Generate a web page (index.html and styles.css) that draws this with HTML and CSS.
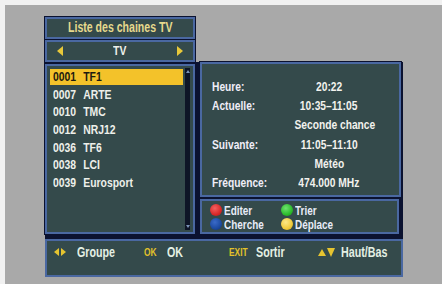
FILE: index.html
```html
<!DOCTYPE html>
<html lang="fr">
<head>
<meta charset="utf-8">
<title>Liste des chaines TV</title>
<link rel="stylesheet" href="styles.css">
</head>
<body>
<div class="screen">
  <div class="top">
    <div class="left">
      <div class="box title"><span class="n nc">Liste des chaines TV</span></div>
      <div class="box tvbar">
        <span class="tri tri-left"></span>
        <span class="n nc">TV</span>
        <span class="tri tri-right"></span>
      </div>
      <div class="box list">
        <ul class="channels">
          <li class="ch selected"><span class="n"><span class="num">0001</span>TF1</span></li>
          <li class="ch"><span class="n"><span class="num">0007</span>ARTE</span></li>
          <li class="ch"><span class="n"><span class="num">0010</span>TMC</span></li>
          <li class="ch"><span class="n"><span class="num">0012</span>NRJ12</span></li>
          <li class="ch"><span class="n"><span class="num">0036</span>TF6</span></li>
          <li class="ch"><span class="n"><span class="num">0038</span>LCI</span></li>
          <li class="ch"><span class="n"><span class="num">0039</span>Eurosport</span></li>
        </ul>
        <div class="scrollbar">
          <span class="sb-up"></span>
          <span class="sb-down"></span>
        </div>
      </div>
    </div>
    <div class="right">
      <div class="box info">
        <span class="lbl"><span class="n">Heure:</span></span><span class="val"><span class="n nc">20:22</span></span>
        <span class="lbl"><span class="n">Actuelle:</span></span><span class="val"><span class="n nc">10:35–11:05</span></span>
        <span class="lbl"></span><span class="val"><span class="n nc">Seconde chance</span></span>
        <span class="lbl"><span class="n">Suivante:</span></span><span class="val"><span class="n nc">11:05–11:10</span></span>
        <span class="lbl"></span><span class="val"><span class="n nc">Météo</span></span>
        <span class="lbl"><span class="n">Fréquence:</span></span><span class="val"><span class="n nc">474.000 MHz</span></span>
      </div>
      <div class="box colors">
        <span class="cbtn"><span class="dot red"></span><span class="n">Editer</span></span>
        <span class="cbtn"><span class="dot green"></span><span class="n">Trier</span></span>
        <span class="cbtn"><span class="dot blue"></span><span class="n">Cherche</span></span>
        <span class="cbtn"><span class="dot yellow"></span><span class="n">Déplace</span></span>
      </div>
    </div>
  </div>
  <div class="footwrap">
    <div class="box footer">
      <span class="key"><span class="tri-s tri-s-left"></span><span class="tri-s tri-s-right"></span></span>
      <span class="klabel"><span class="n">Groupe</span></span>
      <span class="key ktext"><span class="n">OK</span></span>
      <span class="klabel"><span class="n">OK</span></span>
      <span class="key ktext"><span class="n">EXIT</span></span>
      <span class="klabel"><span class="n">Sortir</span></span>
      <span class="key"><span class="tri-s tri-s-up"></span><span class="tri-s tri-s-down"></span></span>
      <span class="klabel"><span class="n">Haut/Bas</span></span>
    </div>
  </div>
</div>
</body>
</html>
```

FILE: styles.css
```css
html {
  background: #f1f1f1;
}
body {
  margin: 0;
  margin-top: 5px;
  margin-left: 5px;
  height: 279px;
  background: #a9a9a9;
  overflow: hidden;
}
.screen {
  margin-left: 40px;
  padding-top: 12px;
  width: 358px;
  font-family: "Liberation Sans", Arial, sans-serif;
  font-weight: bold;
  font-size: 13.6px;
  color: #eef0ea;
}
/* narrow (condensed) text */
.n {
  display: inline-block;
  white-space: nowrap;
  transform: scaleX(0.765);
  transform-origin: 0 50%;
}
.nc {
  transform-origin: 50% 50%;
}
.box {
  box-sizing: border-box;
  background: #344a4b;
  border: 2px solid #4a68a1;
  box-shadow: 0 0 0 1px #0b1230;
}
.top {
  display: flex;
  align-items: flex-start;
}
.left {
  width: 150px;
  display: flex;
  flex-direction: column;
}
.title {
  height: 22px;
  text-align: center;
  line-height: 18px;
  color: #e6d98d;
  font-size: 13.8px;
}
.tvbar {
  margin-top: 1px;
  height: 22px;
  display: flex;
  align-items: center;
  justify-content: space-between;
  padding: 0 10px;
  line-height: 18px;
}
.tri {
  width: 0;
  height: 0;
  border-top: 5px solid transparent;
  border-bottom: 5px solid transparent;
}
.tri-left {
  border-right: 6px solid #e8c83a;
}
.tri-right {
  border-left: 6px solid #e8c83a;
}
.list {
  margin-top: 2px;
  height: 170px;
  display: flex;
  padding: 2px 3px 2px 3px;
  gap: 2px;
}
.channels {
  list-style: none;
  margin: 0;
  padding: 0;
  flex: 1;
}
.ch {
  height: 17.67px;
  line-height: 17.67px;
  padding-left: 3px;
}
.num {
  display: inline-block;
  width: 39.5px;
}
.ch.selected {
  background: linear-gradient(#f3c22a, #f3c22a) center / 100% 16px no-repeat;
  color: #1c1a10;
}
.scrollbar {
  width: 5px;
  background: #0e1526;
  display: flex;
  flex-direction: column;
  justify-content: space-between;
  align-items: center;
  padding: 2px 0;
}
.sb-up, .sb-down {
  width: 0;
  height: 0;
  border-left: 2px solid transparent;
  border-right: 2px solid transparent;
}
.sb-up {
  border-bottom: 3px solid #7c94b8;
}
.sb-down {
  border-top: 3px solid #7c94b8;
}
.right {
  margin-top: 45px;
  width: 208px;
  box-sizing: border-box;
  padding-left: 5px;
  background: #0b1230;
}
.info {
  width: 201px;
  height: 135px;
  display: grid;
  grid-template-columns: 70px 94px;
  grid-auto-rows: 19.2px;
  align-items: center;
  padding: 13px 0 0 10px;
  font-size: 13.4px;
}
.lbl {
  color: #f0eef8;
}
.val {
  text-align: center;
  color: #f2f2ee;
}
.colors {
  margin-top: 2px;
  width: 199px;
  height: 35px;
  display: grid;
  grid-template-columns: 71px auto;
  grid-auto-rows: 14px;
  align-items: center;
  padding: 2px 0 0 8px;
  font-size: 13px;
  line-height: 13px;
  color: #e8ecf8;
}
.cbtn {
  display: flex;
  align-items: center;
  gap: 2px;
  height: 14px;
}
.dot {
  width: 12px;
  height: 12px;
  border-radius: 50%;
  flex: none;
}
.red {
  background: radial-gradient(circle at 40% 35%, #f46060, #d82828 60%, #a81818);
}
.green {
  background: radial-gradient(circle at 40% 35%, #6ee26e, #2cbb2c 60%, #1a8a1a);
}
.blue {
  background: radial-gradient(circle at 40% 35%, #3a6ac8, #1c4aa0 60%, #102e70);
}
.yellow {
  background: radial-gradient(circle at 40% 35%, #fbe888, #f0cc3c 60%, #c89e1c);
}
.footwrap {
  background: #0b1230;
  padding-top: 5px;
}
.footer {
  height: 38px;
  display: grid;
  grid-template-columns: 23px 67px 23px 62px 27px 62px 23px auto;
  align-items: start;
  padding: 2px 0 0 7px;
  line-height: 18px;
  font-size: 14px;
  color: #e4f0e4;
  box-shadow: none;
}
.key {
  display: flex;
  align-items: center;
  height: 18px;
}
.ktext {
  color: #e2c22a;
  font-size: 11px;
}
.tri-s {
  width: 0;
  height: 0;
}
.tri-s-left {
  border-top: 4.5px solid transparent;
  border-bottom: 4.5px solid transparent;
  border-right: 5px solid #e6c430;
  margin-right: 2px;
}
.tri-s-right {
  border-top: 4.5px solid transparent;
  border-bottom: 4.5px solid transparent;
  border-left: 5px solid #e6c430;
}
.tri-s-up {
  border-left: 4px solid transparent;
  border-right: 4px solid transparent;
  border-bottom: 7px solid #e6c430;
  margin-right: 1px;
}
.tri-s-down {
  border-left: 4.5px solid transparent;
  border-right: 4.5px solid transparent;
  border-top: 9px solid #e6c430;
}
```
